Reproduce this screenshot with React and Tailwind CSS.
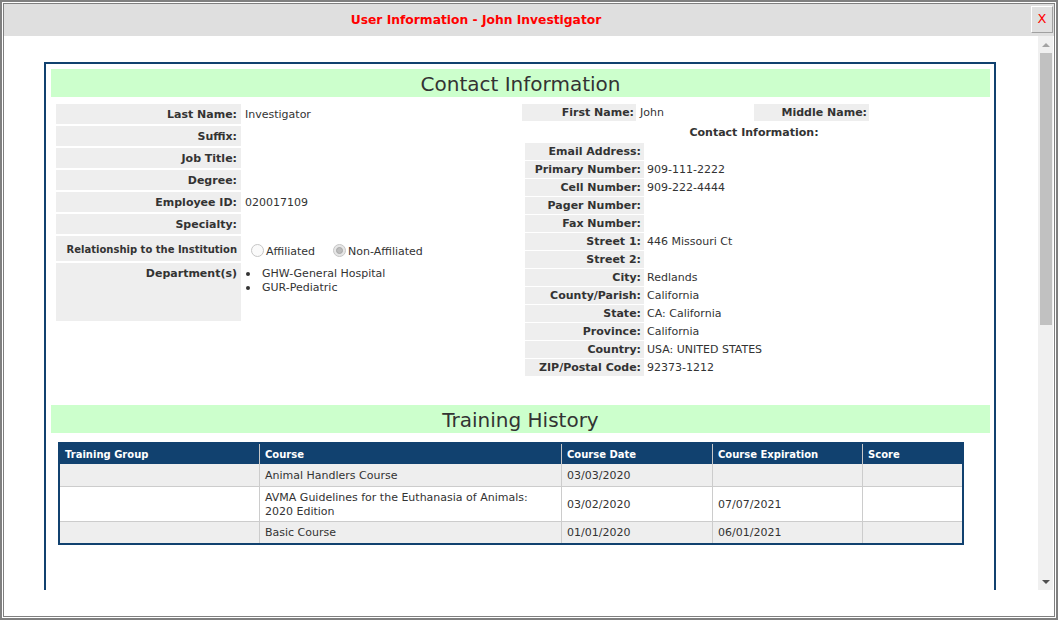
import React from 'react'

const left = [
  ['Last Name:', 'Investigator'],
  ['Suffix:', ''],
  ['Job Title:', ''],
  ['Degree:', ''],
  ['Employee ID:', '020017109'],
  ['Specialty:', ''],
]

const contact = [
  ['Email Address:', ''],
  ['Primary Number:', '909-111-2222'],
  ['Cell Number:', '909-222-4444'],
  ['Pager Number:', ''],
  ['Fax Number:', ''],
  ['Street 1:', '446 Missouri Ct'],
  ['Street 2:', ''],
  ['City:', 'Redlands'],
  ['County/Parish:', 'California'],
  ['State:', 'CA: California'],
  ['Province:', 'California'],
  ['Country:', 'USA: UNITED STATES'],
  ['ZIP/Postal Code:', '92373-1212'],
]

const training = [
  { group: '', course: ['Animal Handlers Course'], date: '03/03/2020', exp: '', score: '', bg: 'bg-[#eeeeee]', h: 'h-[23px]' },
  { group: '', course: ['AVMA Guidelines for the Euthanasia of Animals:', '2020 Edition'], date: '03/02/2020', exp: '07/07/2021', score: '', bg: 'bg-white', h: 'h-[35px]' },
  { group: '', course: ['Basic Course'], date: '01/01/2020', exp: '06/01/2021', score: '', bg: 'bg-[#eeeeee]', h: 'h-[21px]' },
]

function Radio({ checked, label }) {
  return (
    <div className="flex items-center mr-[18px]">
      <div className={`w-[13px] h-[13px] rounded-full border flex items-center justify-center ${checked ? 'border-[#c6c6c6] bg-[#e6e6e6]' : 'border-[#c6c6c6] bg-[#fafafa]'}`}>
        {checked && <div className="w-[7px] h-[7px] rounded-full bg-[#bdbdbd] border border-[#a8a8a8]" />}
      </div>
      <span className="ml-[2px] mt-[3px]">{label}</span>
    </div>
  )
}

function GreenBar({ children }) {
  return (
    <div className="ml-[5px] w-[939px] h-[28px] bg-[#ccffcc] flex items-center justify-center pt-px text-[20px] text-[#333]">
      {children}
    </div>
  )
}

export default function App() {
  return (
    <div className="w-[1058px] h-[620px] border-2 border-[#808080] p-px bg-white font-['DejaVu_Sans',sans-serif] text-[11px] text-[#333] leading-[14px]">
      <div className="h-full border border-[#808080] flex flex-col">
        {/* title bar */}
        <div className="h-[32px] bg-[#dfdfdf] flex items-center shrink-0">
          <div className="w-[944px] text-center text-[12.3px] font-bold text-[#ff0000] -mt-px">User Information - John Investigator</div>
          <div className="flex-1" />
          <div className="w-[22px] h-[27px] mr-px -mt-[2px] bg-[#e0e0e0] border border-t-white border-l-white border-r-[#a0a0a0] border-b-[#a0a0a0] flex items-center justify-center text-[13px] text-[#ff0000]">
            X
          </div>
        </div>

        {/* scroll viewport */}
        <div className="h-[554px] flex shrink-0">
          <div className="flex-1 overflow-hidden pl-[40px] pt-[26px]">
            <div className="w-[952px] h-[600px] border-2 border-[#11416f] pt-[5px]">
              <GreenBar>Contact Information</GreenBar>

              <div className="flex pl-[10px] pt-[7px]">
                {/* left column */}
                <div className="w-[466px] flex flex-col gap-[2px]">
                  {left.map(([k, v]) => (
                    <div key={k} className="flex h-[20px]">
                      <div className="w-[185px] bg-[#eeeeee] flex items-center justify-end pr-[4px] pt-px font-bold">{k}</div>
                      <div className="pl-[4px] pt-px flex items-center">{v}</div>
                    </div>
                  ))}
                  <div className="flex h-[25px]">
                    <div className="w-[185px] bg-[#eeeeee] flex items-center justify-end pr-[4px] pt-[2px] font-bold text-[10px]">Relationship to the Institution</div>
                    <div className="pl-[10px] flex items-center pt-[3px]">
                      <Radio label="Affiliated" />
                      <Radio checked label="Non-Affiliated" />
                    </div>
                  </div>
                  <div className="flex h-[58px]">
                    <div className="w-[185px] bg-[#eeeeee] flex justify-end pr-[4px] pt-[4px] font-bold">Department(s)</div>
                    <div className="pt-[4px]">
                      {['GHW-General Hospital', 'GUR-Pediatric'].map(d => (
                        <div key={d} className="flex items-center">
                          <div className="ml-[5px] w-[4px] h-[4px] rounded-full bg-[#333]" />
                          <span className="ml-[12px]">{d}</span>
                        </div>
                      ))}
                    </div>
                  </div>
                </div>

                {/* right column */}
                <div className="w-[464px]">
                  <div className="flex h-[17px]">
                    <div className="w-[114px] bg-[#eeeeee] flex items-center justify-end pr-[2px] pt-px font-bold">First Name:</div>
                    <div className="w-[118px] pl-[4px] pt-px flex items-center">John</div>
                    <div className="w-[115px] bg-[#eeeeee] flex items-center justify-end pr-[2px] pt-px font-bold">Middle Name:</div>
                  </div>
                  <div className="h-[22px] flex items-center justify-center pt-[2px] font-bold">Contact Information:</div>
                  <div className="ml-[3px] flex flex-col gap-px">
                    {contact.map(([k, v]) => (
                      <div key={k} className="flex h-[17px]">
                        <div className="w-[119px] bg-[#eeeeee] flex items-center justify-end pr-[3px] pt-px font-bold">{k}</div>
                        <div className="pl-[3px] pt-px flex items-center">{v}</div>
                      </div>
                    ))}
                  </div>
                </div>
              </div>

              <div className="mt-[29px]">
                <GreenBar>Training History</GreenBar>
              </div>

              <div className="ml-[12px] mt-[9px] w-[906px] border-2 border-[#11416f]">
                <div className="grid grid-cols-[199px_302px_151px_150px_100px] h-[20px] bg-[#11416f] text-white font-bold text-[10px]">
                  {['Training Group', 'Course', 'Course Date', 'Course Expiration', 'Score'].map((h, i) => (
                    <div key={h} className={`flex items-center pl-[5px] pt-px ${i > 0 ? 'border-l border-[#c8c8c8]' : ''}`}>{h}</div>
                  ))}
                </div>
                {training.map((r, idx) => (
                  <div key={idx} className={`grid grid-cols-[199px_302px_151px_150px_100px] ${r.h} ${r.bg} ${idx < training.length - 1 ? 'border-b border-[#cccccc]' : ''}`}>
                    <div className="flex items-center pl-[5px]">{r.group}</div>
                    <div className="flex flex-col justify-center pl-[5px] pt-px border-l border-[#cccccc]">
                      {r.course.map(c => <div key={c}>{c}</div>)}
                    </div>
                    <div className="flex items-center pl-[5px] pt-px border-l border-[#cccccc]">{r.date}</div>
                    <div className="flex items-center pl-[5px] pt-px border-l border-[#cccccc]">{r.exp}</div>
                    <div className="flex items-center pl-[5px] pt-px border-l border-[#cccccc]">{r.score}</div>
                  </div>
                ))}
              </div>
            </div>
          </div>

          {/* scrollbar */}
          <div className="w-[15px] mr-px bg-[#f0f0f0] flex flex-col items-center shrink-0">
            <div className="h-[17px] flex items-center justify-center">
              <div className="w-0 h-0 border-l-[4px] border-r-[4px] border-b-[4px] border-l-transparent border-r-transparent border-b-[#a3a3a3]" />
            </div>
            <div className="w-[12px] h-[272px] bg-[#c1c1c1]" />
            <div className="flex-1" />
            <div className="h-[17px] flex items-center justify-center">
              <div className="w-0 h-0 border-l-[4px] border-r-[4px] border-t-[4px] border-l-transparent border-r-transparent border-t-[#505050]" />
            </div>
          </div>
        </div>

        <div className="flex-1" />
      </div>
    </div>
  )
}
